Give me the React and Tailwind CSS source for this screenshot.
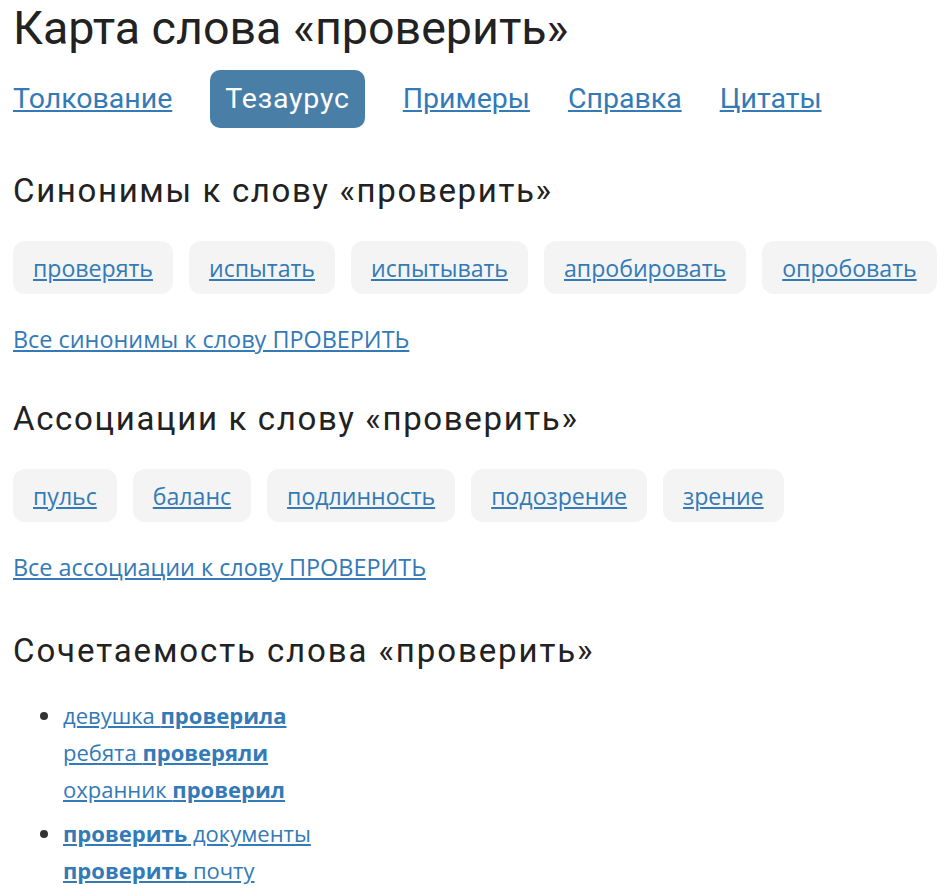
import React from "react";

const syn = ["проверять", "испытать", "испытывать", "апробировать", "опробовать"];
const assoc = ["пульс", "баланс", "подлинность", "подозрение", "зрение"];

function Tags({ items }) {
  return (
    <div className="flex gap-4 mt-[32px]">
      {items.map((t) => (
        <div key={t} className="h-[53px] shrink-0 flex items-center px-5 rounded-[12px] bg-[#f4f4f4]">
          <a href="#" className="text-[#337ab7] underline text-[23.1px] leading-[32px] font-['Open_Sans',sans-serif]">{t}</a>
        </div>
      ))}
    </div>
  );
}

export default function App() {
  return (
    <div className="px-[13px] pt-[3px] text-[#222] font-['Roboto',sans-serif] bg-white min-h-[896px]">
      <h1 className="text-[46.6px] leading-[50px]">Карта слова «проверить»</h1>
      <nav className="flex gap-[38px] mt-[17px] text-[28.5px]">
        {["Толкование", "Тезаурус", "Примеры", "Справка", "Цитаты"].map((n) =>
          n === "Тезаурус" ? (
            <span key={n} className="h-[58px] flex items-center px-[15px] rounded-[10px] bg-[#497fa7] text-white tracking-[0.8px]">{n}</span>
          ) : (
            <a key={n} href="#" className="h-[58px] flex items-center text-[#337ab7] underline">{n}</a>
          )
        )}
      </nav>
      <h2 className="text-[33px] leading-[36px] tracking-[1.65px] mt-[45px]">Синонимы к слову «проверить»</h2>
      <Tags items={syn} />
      <a href="#" className="block w-fit mt-[29px] text-[#337ab7] underline text-[23.4px] leading-[32px] font-['Open_Sans',sans-serif]">Все синонимы к слову ПРОВЕРИТЬ</a>
      <h2 className="text-[33px] leading-[36px] tracking-[1.65px] mt-[46px]">Ассоциации к слову «проверить»</h2>
      <Tags items={assoc} />
      <a href="#" className="block w-fit mt-[29px] text-[#337ab7] underline text-[23.4px] leading-[32px] font-['Open_Sans',sans-serif]">Все ассоциации к слову ПРОВЕРИТЬ</a>
      <h2 className="text-[33px] leading-[36px] tracking-[1.9px] mt-[50px]">Сочетаемость слова «проверить»</h2>
      <ul className="list-disc pl-[50px] mt-[28px] text-[22px] leading-[37px] font-['Open_Sans',sans-serif] marker:text-[#333]">
        <li className="mb-[7px]">
          <a href="#" className="text-[#337ab7] underline">девушка <b>проверила</b></a><br />
          <a href="#" className="text-[#337ab7] underline">ребята <b>проверяли</b></a><br />
          <a href="#" className="text-[#337ab7] underline">охранник <b>проверил</b></a>
        </li>
        <li>
          <a href="#" className="text-[#337ab7] underline"><b>проверить</b> документы</a><br />
          <a href="#" className="text-[#337ab7] underline"><b>проверить</b> почту</a>
        </li>
      </ul>
    </div>
  );
}
